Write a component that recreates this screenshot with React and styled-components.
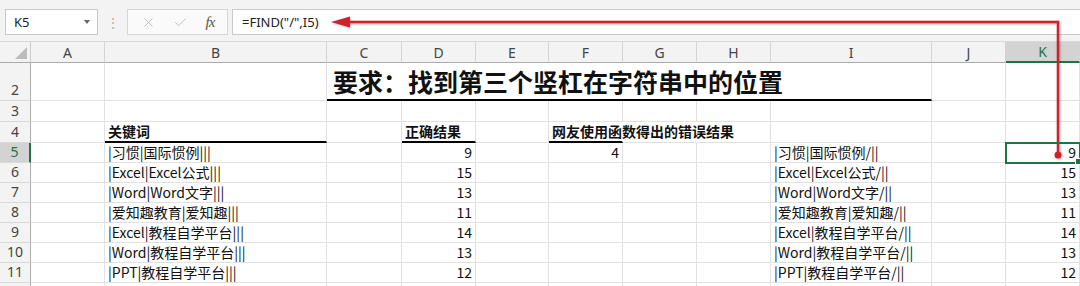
import React from "react";
import styled, { createGlobalStyle, css } from "styled-components";
import { X, Check } from "lucide-react";

const GlobalStyle = createGlobalStyle`
  body {
    margin: 0;
    background: #ffffff;
    -webkit-font-smoothing: antialiased;
  }
`;

const Window = styled.div`
  position: relative;
  width: 1080px;
  height: 286px;
  overflow: hidden;
  background: #ffffff;
  font-family: "Noto Sans", "Noto Sans CJK SC", sans-serif;
`;

const Toolbar = styled.div`
  box-sizing: border-box;
  height: 42px;
  padding-top: 9px;
  display: flex;
  align-items: flex-start;
  background: #f3f3f3;
  border-bottom: 1px solid #d9d9d9;
`;

const NameBox = styled.div`
  box-sizing: border-box;
  margin-left: 5px;
  width: 93px;
  height: 26px;
  padding: 0 7px 0 8px;
  display: flex;
  align-items: center;
  justify-content: space-between;
  background: #ffffff;
  border: 1px solid #c9c9c9;
  font-size: 13px;
  color: #222;
`;

const Caret = styled.span`
  width: 0;
  height: 0;
  border-left: 3.5px solid transparent;
  border-right: 3.5px solid transparent;
  border-top: 4px solid #666;
`;

const Grip = styled.div`
  width: 29px;
  height: 26px;
  display: flex;
  align-items: center;
  justify-content: center;
  color: #b4b4b4;
  font-size: 14px;
`;

const ButtonBox = styled.div`
  box-sizing: border-box;
  width: 101px;
  height: 26px;
  display: flex;
  align-items: center;
  justify-content: space-around;
  padding: 0 4px;
  background: #fafafa;
  border: 1px solid #d6d6d6;
`;

const Fx = styled.span`
  font-family: "Liberation Serif", serif;
  font-style: italic;
  font-size: 15px;
  color: #555;
  letter-spacing: -1px;
`;

const FormulaInput = styled.div`
  box-sizing: border-box;
  flex: 1;
  margin-left: 4px;
  height: 26px;
  padding-left: 9px;
  display: flex;
  align-items: center;
  background: #ffffff;
  border: 1px solid #c9c9c9;
  border-right: none;
  font-size: 13px;
  color: #222;
`;

const Sheet = styled.div`
  display: grid;
  grid-template-columns: 31px 74px 222px 75px 74px 73px 74px 74px 74px 161px 74px 74px;
  grid-template-rows: 21px 38px 21px 21px repeat(8, 20px);
  background: #ffffff;
`;

const Corner = styled.div`
  position: relative;
  background: #f3f3f3;
  border-right: 1px solid #cfcfcf;
  border-bottom: 1px solid #ababab;
  box-sizing: border-box;

  &::after {
    content: "";
    position: absolute;
    right: 3px;
    bottom: 3px;
    width: 0;
    height: 0;
    border-left: 12px solid transparent;
    border-bottom: 12px solid #bdbdbd;
  }
`;

const ColHead = styled.div`
  box-sizing: border-box;
  display: flex;
  align-items: center;
  justify-content: center;
  font-size: 14px;
  background: ${(p) => (p.$active ? "#d3d3d3" : "#f3f3f3")};
  color: ${(p) => (p.$active ? "#217346" : "#444")};
  border-right: 1px solid #d4d4d4;
  border-bottom: ${(p) => (p.$active ? "2px solid #217346" : "1px solid #ababab")};
`;

const RowHead = styled.div`
  box-sizing: border-box;
  display: flex;
  align-items: flex-end;
  justify-content: center;
  padding-bottom: 1px;
  font-size: 14px;
  line-height: 18px;
  background: ${(p) => (p.$active ? "#d3d3d3" : "#f3f3f3")};
  color: ${(p) => (p.$active ? "#217346" : "#444")};
  border-right: ${(p) => (p.$active ? "2px solid #217346" : "1px solid #ababab")};
  border-bottom: 1px solid #d9d9d9;
`;

const Cell = styled.div`
  box-sizing: border-box;
  position: relative;
  min-width: 0;
  display: flex;
  align-items: flex-end;
  justify-content: ${(p) => (p.$num ? "flex-end" : "flex-start")};
  padding: 0 3px 1px 3px;
  font-family: "Noto Sans CJK SC", "Noto Sans", sans-serif;
  font-size: 14px;
  line-height: 18px;
  font-weight: ${(p) => (p.$bold ? 700 : 400)};
  color: #111;
  white-space: nowrap;
  border-right: 1px solid ${(p) => (p.$noRight ? "transparent" : "#e1e1e1")};
  border-bottom: ${(p) => (p.$under ? "2px solid #000" : "1px solid #e1e1e1")};

  ${(p) =>
    p.$active &&
    css`
      z-index: 1;
      outline: 2px solid #217346;
      outline-offset: -1px;

      &::after {
        content: "";
        position: absolute;
        right: -3px;
        bottom: -3px;
        width: 5px;
        height: 5px;
        background: #217346;
        border: 1px solid #fff;
      }
    `}
`;

const TitleCell = styled.div`
  grid-column: span 7;
  box-sizing: border-box;
  display: flex;
  align-items: flex-end;
  padding: 0 0 2px 6px;
  font-family: "Noto Sans CJK SC", sans-serif;
  font-size: 25px;
  line-height: 32px;
  font-weight: 700;
  color: #111;
  white-space: nowrap;
  border-right: 1px solid #e1e1e1;
  border-bottom: 2px solid #000;
`;

const Overlay = styled.svg`
  position: absolute;
  top: 0;
  left: 0;
  pointer-events: none;
  filter: drop-shadow(1px 1px 1px rgba(0, 0, 0, 0.3));
`;

const letters = ["A", "B", "C", "D", "E", "F", "G", "H", "I", "J", "K"];

const keywords = [
  "|习惯|国际惯例|||",
  "|Excel|Excel公式|||",
  "|Word|Word文字|||",
  "|爱知趣教育|爱知趣|||",
  "|Excel|教程自学平台|||",
  "|Word|教程自学平台|||",
  "|PPT|教程自学平台|||",
];
const answers = [9, 15, 13, 11, 14, 13, 12];

const cells = {
  B4: { text: "关键词", bold: true, under: true },
  D4: { text: "正确结果", bold: true, under: true },
  F4: { text: "网友使用函数得出的错误结果", bold: true, under: true, noRight: true },
  G4: { noRight: true },
  F5: { text: 4, num: true },
  K5: { active: true },
};
keywords.forEach((k, i) => {
  const r = i + 5;
  cells[`B${r}`] = { text: k };
  cells[`D${r}`] = { text: answers[i], num: true };
  cells[`I${r}`] = { text: k.replace(/\|\|\|$/, "/||") };
  cells[`K${r}`] = { ...(cells[`K${r}`] || {}), text: answers[i], num: true };
});

// row 12 only peeks in at the bottom edge, so its number is not shown
const rowNumbers = [2, 3, 4, 5, 6, 7, 8, 9, 10, 11, 12];

function Row({ n }) {
  const out = [
    <RowHead key="h" $active={n === 5}>
      {n < 12 ? n : null}
    </RowHead>,
  ];
  letters.forEach((l) => {
    if (n === 2 && l === "C") {
      out.push(<TitleCell key={l}>要求：找到第三个竖杠在字符串中的位置</TitleCell>);
      return;
    }
    if (n === 2 && "DEFGHI".includes(l)) return;
    const c = cells[`${l}${n}`] || {};
    out.push(
      <Cell
        key={l}
        $bold={c.bold}
        $under={c.under}
        $num={c.num}
        $noRight={c.noRight}
        $active={c.active}
      >
        {c.text}
      </Cell>
    );
  });
  return out;
}

export default function App() {
  return (
    <Window>
      <GlobalStyle />
      <Toolbar>
        <NameBox>
          K5
          <Caret />
        </NameBox>
        <Grip>⋮</Grip>
        <ButtonBox>
          <X size={15} strokeWidth={1.4} color="#b9b9b9" />
          <Check size={15} strokeWidth={1.4} color="#b9b9b9" />
          <Fx>fx</Fx>
        </ButtonBox>
        <FormulaInput>=FIND("/",I5)</FormulaInput>
      </Toolbar>
      <Sheet>
        <Corner />
        {letters.map((l) => (
          <ColHead key={l} $active={l === "K"}>
            {l}
          </ColHead>
        ))}
        {rowNumbers.map((n) => (
          <Row key={n} n={n} />
        ))}
      </Sheet>
      <Overlay width="1080" height="286" viewBox="0 0 1080 286">
        <path d="M1058 155 V22 H348" stroke="#d0222b" strokeWidth="2.5" fill="none" />
        <polygon points="331,22 350,16.5 350,27.5" fill="#d0222b" />
        <circle cx="1058" cy="155" r="3.5" fill="#d0222b" />
      </Overlay>
    </Window>
  );
}
